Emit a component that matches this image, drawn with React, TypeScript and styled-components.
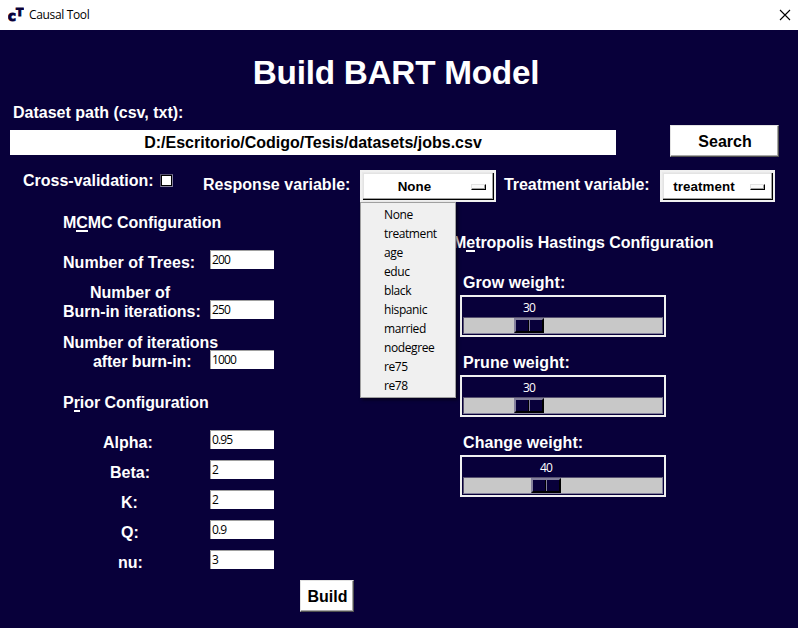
import React from "react";
import styled, { createGlobalStyle, css } from "styled-components";

const NAVY = "#08003a";
const FACE = "#f0f0f0";

const GlobalStyle = createGlobalStyle`
  *, *::before, *::after { box-sizing: border-box; }
  body { margin: 0; background: ${NAVY}; overflow: hidden; }
`;

const uiFont = css`
  font-family: "Open Sans", "Noto Sans", sans-serif;
  font-size: 12px;
  letter-spacing: -0.4px;
`;

const Window = styled.div`
  width: 798px;
  height: 628px;
  display: flex;
  flex-direction: column;
  background: ${NAVY};
  color: #fff;
  font: bold 16px/19px "Liberation Sans", Arial, sans-serif;
  white-space: nowrap;
`;

const TitleBar = styled.header`
  ${uiFont}
  font-weight: 400;
  display: flex;
  align-items: center;
  height: 30px;
  padding: 0 7px 0 8px;
  background: #fff;
  color: #000;
`;

const WindowName = styled.span`
  flex: 1;
  margin-left: 5px;
  padding-bottom: 1px;
  letter-spacing: -0.35px;
`;

const Heading = styled.h1`
  margin: 23px 0 0;
  padding-right: 6px;
  height: 39px;
  font-size: 33.3px;
  line-height: 40px;
  letter-spacing: -0.25px;
  text-align: center;
`;

const PathLabel = styled.label`
  margin: 11px 0 0 13px;
`;

const PathRow = styled.div`
  display: flex;
  align-items: center;
  justify-content: space-between;
  height: 32px;
  margin: 3px 19px 0 10px;
`;

const PathInput = styled.input`
  width: 606px;
  height: 25px;
  margin-top: 3px;
  padding: 0;
  border: 0;
  background: #fff;
  color: #000;
  font: inherit;
  text-align: center;
`;

const RaisedButton = styled.button<{ $width: number }>`
  width: ${(p) => p.$width}px;
  height: 32px;
  padding: 1px 0 0 1px;
  border: 1px solid;
  border-color: #e3e3e3 #505050 #505050 #e3e3e3;
  box-shadow: inset -1px -1px 0 #a8a8a8;
  background: #fff;
  color: #000;
  font: inherit;
`;

const VariableRow = styled.div`
  display: flex;
  height: 32px;
  margin: 13px 0 0 23px;
`;

const CheckLabel = styled.label`
  display: flex;
  width: 180px;
  margin-top: 1px;
  gap: 6px;
`;

const CheckBox = styled.span`
  width: 13px;
  height: 13px;
  margin-top: 3px;
  border: 1px solid #84809c;
  border-color: #56506f #84809c #84809c #56506f;
  background: #fff;
  box-shadow: inset 0 0 0 1px #000;
`;

const VariableLabel = styled.span<{ $width: number; $spacing: number }>`
  width: ${(p) => p.$width}px;
  margin-top: 5px;
  letter-spacing: ${(p) => p.$spacing}px;
`;

const SelectWrap = styled.div<{ $width: number; $gap?: number }>`
  position: relative;
  width: ${(p) => p.$width}px;
  height: 32px;
  margin-right: ${(p) => p.$gap ?? 0}px;
`;

const SelectFace = styled.button`
  display: flex;
  align-items: center;
  width: 100%;
  height: 32px;
  padding: 1px 8px 0 0;
  border: 2px solid ${FACE};
  background: #fff;
  box-shadow: inset 1px 1px 0 #e9e9e9, inset -1px -1px 0 #000,
    inset -2px -2px 0 #a0a0a0, inset 2px 2px 0 #e3e3e3;
  color: #000;
  font: bold 13.33px/16px "Liberation Sans", Arial, sans-serif;
  letter-spacing: 0.1px;
`;

const SelectText = styled.span`
  flex: 1;
  padding: 1px 4px 0 0;
  text-align: center;
`;

const Indicator = styled.span`
  width: 15px;
  height: 6px;
  background: #fafafa;
  border: 1px solid;
  border-color: #e3e3e3 #000 #000 #e3e3e3;
  box-shadow: inset -1px -1px 0 #a0a0a0;
`;

const Menu = styled.ul`
  ${uiFont}
  position: absolute;
  z-index: 2;
  top: 32px;
  left: 0;
  width: 96px;
  height: 196px;
  margin: 0;
  padding: 2px 0;
  border: 1px solid #a0a0a0;
  background: ${FACE};
  box-shadow: 2px 2px 3px rgba(0, 0, 0, 0.5);
  color: #000;
  font-weight: 400;
  list-style: none;
`;

const MenuItem = styled.li`
  height: 19px;
  padding-left: 23px;
  line-height: 19px;
`;

const Columns = styled.div`
  display: grid;
  grid-template-columns: 390px 1fr;
  height: 378px;
  padding: 11px 0 0 63px;
`;

const Section = styled.section<{ $top?: number }>`
  display: flex;
  flex-direction: column;
  align-items: flex-start;
  padding-top: ${(p) => p.$top ?? 0}px;
`;

const SectionTitle = styled.h2<{ $gap: number }>`
  height: 19px;
  margin: 0 0 ${(p) => p.$gap}px;
  font: inherit;
  letter-spacing: -0.05px;
`;

const Mnemonic = styled.span`
  display: inline-block;
  height: 19px;
  vertical-align: top;
  border-bottom: 2px solid #fff;
`;

const Field = styled.label<{ $height: number; $gap: number }>`
  display: flex;
  align-items: flex-end;
  height: ${(p) => p.$height}px;
  margin-bottom: ${(p) => p.$gap}px;
`;

const FieldLabel = styled.span`
  width: 147px;
`;

const LabelLine = styled.span<{ $indent: number; $spacing?: number }>`
  display: block;
  padding-left: ${(p) => p.$indent}px;
  letter-spacing: ${(p) => p.$spacing ?? 0}px;
`;

const Entry = styled.input<{ $drop: number }>`
  ${uiFont}
  letter-spacing: -0.85px;
  width: 64px;
  height: 19px;
  margin-bottom: ${(p) => 3 - p.$drop}px;
  padding: 0 0 1px 1px;
  border: 0 solid #a0a0a0;
  border-width: 1px 0 0 1px;
  background: #fff;
  color: #000;
`;

const ScaleGroup = styled.div`
  height: 80px;
  padding-left: 7px;
`;

const ScaleLabel = styled.div`
  height: 22px;
  padding-left: 3px;
  letter-spacing: 0.08px;
`;

const ScaleFrame = styled.div`
  width: 206px;
  height: 42px;
  padding: 1px;
  border: 2px solid ${FACE};
`;

const ScaleValue = styled.div`
  ${uiFont}
  font-weight: 400;
  letter-spacing: -0.85px;
  width: 30px;
  height: 19px;
  line-height: 19px;
  text-align: center;
`;

const Trough = styled.div`
  width: 200px;
  height: 17px;
  border: 1px solid;
  border-color: #56506f #84809c #84809c #56506f;
  background: #c8c8c8;
`;

const Thumb = styled.div`
  display: flex;
  width: 30px;
  height: 15px;
  border: 2px solid;
  border-color: #84809c #000 #000 #84809c;
  background: ${NAVY};
`;

const ThumbHalf = styled.span`
  width: 13px;
  border-right: 1px solid #000;
  & + & {
    border-right: 0;
    border-left: 1px solid #84809c;
  }
`;

const Footer = styled.footer`
  height: 32px;
  padding-left: 300px;
`;

const Logo = () => (
  <svg width="16" height="18" viewBox="0 0 16 18" fill={NAVY} stroke={NAVY}>
    <text x="-0.3" y="14.6" fontFamily="DejaVu Sans" fontWeight="700" fontSize="14" strokeWidth="0.9">
      c
    </text>
    <text x="8" y="9.6" fontFamily="DejaVu Sans" fontWeight="700" fontSize="11" strokeWidth="0.9">
      T
    </text>
  </svg>
);

const CloseIcon = () => (
  <svg width="12" height="12" viewBox="0 0 12 12" stroke="#000" strokeWidth="1.1">
    <path d="M1 1 11 11M11 1 1 11" />
  </svg>
);

type SelectProps = { value: string; width: number; gap?: number; options?: string[] };

const Select = ({ value, width, gap, options }: SelectProps) => (
  <SelectWrap $width={width} $gap={gap}>
    <SelectFace>
      <SelectText>{value}</SelectText>
      <Indicator />
    </SelectFace>
    {options && (
      <Menu>
        {options.map((option) => (
          <MenuItem key={option}>{option}</MenuItem>
        ))}
      </Menu>
    )}
  </SelectWrap>
);

type Line = { text: string; indent: number; spacing?: number };
type FieldData = { lines: Line[]; value: string; gap: number };

const mcmcFields: FieldData[] = [
  { lines: [{ text: "Number of Trees:", indent: 0, spacing: 0.04 }], value: "200", gap: 11 },
  {
    lines: [
      { text: "Number of", indent: 27 },
      { text: "Burn-in iterations:", indent: 0, spacing: -0.05 },
    ],
    value: "250",
    gap: 12,
  },
  {
    lines: [
      { text: "Number of iterations", indent: 0, spacing: -0.07 },
      { text: "after burn-in:", indent: 30, spacing: -0.07 },
    ],
    value: "1000",
    gap: 22,
  },
];

const priorFields: FieldData[] = [
  { lines: [{ text: "Alpha:", indent: 40 }], value: "0.95", gap: 11 },
  { lines: [{ text: "Beta:", indent: 47 }], value: "2", gap: 11 },
  { lines: [{ text: "K:", indent: 58 }], value: "2", gap: 11 },
  { lines: [{ text: "Q:", indent: 58 }], value: "0.9", gap: 11 },
  { lines: [{ text: "nu:", indent: 55 }], value: "3", gap: 0 },
];

const Fields = ({ items }: { items: FieldData[] }) => (
  <>
    {items.map(({ lines, value, gap }) => (
      <Field key={lines[0].text} $height={19 * lines.length} $gap={gap}>
        <FieldLabel>
          {lines.map(({ text, indent, spacing }) => (
            <LabelLine key={text} $indent={indent} $spacing={spacing}>
              {text}
            </LabelLine>
          ))}
        </FieldLabel>
        <Entry $drop={lines.length - 1} defaultValue={value} />
      </Field>
    ))}
  </>
);

const scales = [
  { label: "Grow weight:", value: 30 },
  { label: "Prune weight:", value: 30 },
  { label: "Change weight:", value: 40 },
];

const Scale = ({ label, value }: { label: string; value: number }) => {
  const offset = Math.round((value / 100) * 168);
  return (
    <ScaleGroup>
      <ScaleLabel>{label}</ScaleLabel>
      <ScaleFrame>
        <ScaleValue style={{ marginLeft: offset + 1 }}>{value}</ScaleValue>
        <Trough>
          <Thumb style={{ marginLeft: offset }}>
            <ThumbHalf />
            <ThumbHalf />
          </Thumb>
        </Trough>
      </ScaleFrame>
    </ScaleGroup>
  );
};

const variables = [
  "None", "treatment", "age", "educ", "black",
  "hispanic", "married", "nodegree", "re75", "re78",
];

export default function App() {
  return (
    <Window>
      <GlobalStyle />
      <TitleBar>
        <Logo />
        <WindowName>Causal Tool</WindowName>
        <CloseIcon />
      </TitleBar>
      <Heading>Build BART Model</Heading>
      <PathLabel>Dataset path (csv, txt):</PathLabel>
      <PathRow>
        <PathInput defaultValue="D:/Escritorio/Codigo/Tesis/datasets/jobs.csv" />
        <RaisedButton $width={109}>Search</RaisedButton>
      </PathRow>
      <VariableRow>
        <CheckLabel>
          Cross-validation:
          <CheckBox />
        </CheckLabel>
        <VariableLabel $width={157} $spacing={0.04}>Response variable:</VariableLabel>
        <Select value="None" width={136} gap={8} options={variables} />
        <VariableLabel $width={156} $spacing={-0.06}>Treatment variable:</VariableLabel>
        <Select value="treatment" width={115} />
      </VariableRow>
      <Columns>
        <Section>
          <SectionTitle $gap={21}>
            M<Mnemonic>C</Mnemonic>MC Configuration
          </SectionTitle>
          <Fields items={mcmcFields} />
          <SectionTitle $gap={21}>
            P<Mnemonic>r</Mnemonic>ior Configuration
          </SectionTitle>
          <Fields items={priorFields} />
        </Section>
        <Section $top={20}>
          <SectionTitle $gap={21}>
            M<Mnemonic>e</Mnemonic>tropolis Hastings Configuration
          </SectionTitle>
          {scales.map((scale) => (
            <Scale key={scale.label} {...scale} />
          ))}
        </Section>
      </Columns>
      <Footer>
        <RaisedButton $width={54}>Build</RaisedButton>
      </Footer>
    </Window>
  );
}
